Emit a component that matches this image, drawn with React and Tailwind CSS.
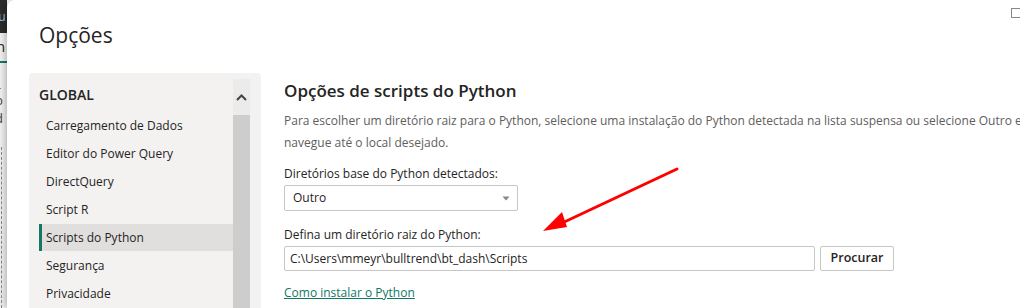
import React from 'react'

const font = "font-['Segoe_UI','Open_Sans','Noto_Sans',sans-serif]"

const navItems = [
  'Carregamento de Dados',
  'Editor do Power Query',
  'DirectQuery',
  'Script R',
  'Scripts do Python',
  'Segurança',
  'Privacidade',
]

const App = () => {
  return (
    <div className={`relative flex w-[1020px] h-[308px] overflow-hidden bg-white ${font}`}>
      {/* app behind the dialog */}
      <div className="flex flex-col w-[7px] shrink-0 overflow-hidden bg-[#f0f0f0]">
        <div className="h-[33px] bg-[#2b2b2b] text-[12px] leading-[33px] text-[#8fc7e8] whitespace-nowrap -ml-[6px]">tu</div>
        <div className="h-[28px] text-[15px] leading-[26px] text-[#252423] -ml-[4px]">n</div>
        <div className="h-[2px] bg-[#117865]"></div>
        <div className="h-[10px]"></div>
        <div className="text-[13px] leading-[18px] text-[#444] -ml-[5px]">_</div>
        <div className="text-[13px] leading-[18px] text-[#444] -ml-[5px]">b</div>
        <div className="text-[13px] leading-[18px] text-[#444] -ml-[5px]">d</div>
        <div className="flex-1 mt-[20px] border-l border-dashed border-[#888] ml-[1px]"></div>
      </div>

      {/* dialog */}
      <div className="flex flex-col flex-1 bg-white rounded-tl-[8px] shadow-[-2px_0_6px_rgba(0,0,0,0.25)]">
        <div className="pl-[32px] pt-[20px] h-[73px] text-[21px] leading-[30px] text-[#252423]">Opções</div>

        <div className="flex flex-1 min-h-0">
          {/* nav panel */}
          <div className="flex ml-[22px] w-[232px] bg-[#f3f2f1] rounded-t-[4px]">
            <div className="flex flex-col flex-1 pl-[10px] pt-[11px]">
              <div className="h-[22px] text-[14px] leading-[22px] font-semibold text-[#252423]">GLOBAL</div>
              <div className="flex flex-col mt-[6px]">
                {navItems.map((item) => {
                  const active = item === 'Scripts do Python'
                  return (
                    <div
                      key={item}
                      className={active
                        ? 'h-[27px] mb-[1px] flex items-center pl-[4px] border-l-[3px] border-[#117865] bg-[#e1dfdd] text-[12px] text-[#252423]'
                        : 'h-[27px] mb-[1px] flex items-center pl-[7px] text-[12px] text-[#252423]'}
                    >
                      {item}
                    </div>
                  )
                })}
              </div>
            </div>
            {/* scrollbar */}
            <div className="flex flex-col w-[17px] mt-[6px] mr-[11px] bg-[#ebebeb]">
              <div className="h-[36px] flex items-center justify-center">
                <svg width="11" height="7" viewBox="0 0 11 7">
                  <path d="M1 6 L5.5 1.5 L10 6" fill="none" stroke="#444" strokeWidth="2" />
                </svg>
              </div>
              <div className="flex-1 bg-[#cdcdcd]"></div>
            </div>
          </div>

          {/* content */}
          <div className="flex flex-col flex-1 pl-[23px] pt-[5px] text-[#252423]">
            <div className="text-[17px] leading-[26px] font-semibold">Opções de scripts do Python</div>
            <div className="mt-[6px] text-[12px] leading-[22px] text-[#605e5c] whitespace-nowrap">
              Para escolher um diretório raiz para o Python, selecione uma instalação do Python detectada na lista suspensa ou selecione Outro e
            </div>
            <div className="text-[12px] leading-[22px] text-[#605e5c]">navegue até o local desejado.</div>

            <div className="mt-[11px] text-[12px] leading-[18px]">Diretórios base do Python detectados:</div>
            <div className="mt-[2px] flex items-center justify-between w-[234px] h-[26px] border border-[#c8c6c4] rounded-[2px] pl-[8px] pr-[7px] text-[12px]">
              <span>Outro</span>
              <svg width="8" height="5" viewBox="0 0 8 5">
                <path d="M0.5 0.5 L7.5 0.5 L4 4.5 Z" fill="#8a8886" />
              </svg>
            </div>

            <div className="mt-[15px] text-[12px] leading-[18px]">Defina um diretório raiz do Python:</div>
            <div className="mt-[2px] flex gap-[5px]">
              <div className="flex items-center w-[531px] h-[25px] border border-[#c8c6c4] rounded-[2px] pl-[5px] text-[12px]">
                C:\Users\mmeyr\bulltrend\bt_dash\Scripts
              </div>
              <button type="button" className="w-[74px] h-[25px] border border-[#c8c6c4] rounded-[2px] bg-white text-[12.5px] font-semibold text-[#252423]">
                Procurar
              </button>
            </div>

            <div className="mt-[13px] text-[12px] leading-[18px] text-[#117865] underline">Como instalar o Python</div>
          </div>
        </div>
      </div>

      {/* maximize glyph, cut by the window edge */}
      <div className="absolute left-[1011px] top-[8px] w-[11px] h-[10px] border border-[#8a8886]"></div>

      {/* red annotation arrow */}
      <svg className="absolute left-0 top-0 pointer-events-none" width="1020" height="308" viewBox="0 0 1020 308">
        <line x1="677" y1="169" x2="560" y2="224" stroke="#ff0000" strokeWidth="3" strokeLinecap="round" />
        <path d="M543 231 L562 212 L567 227 Z" fill="#ff0000" />
      </svg>
    </div>
  )
}

export default App
